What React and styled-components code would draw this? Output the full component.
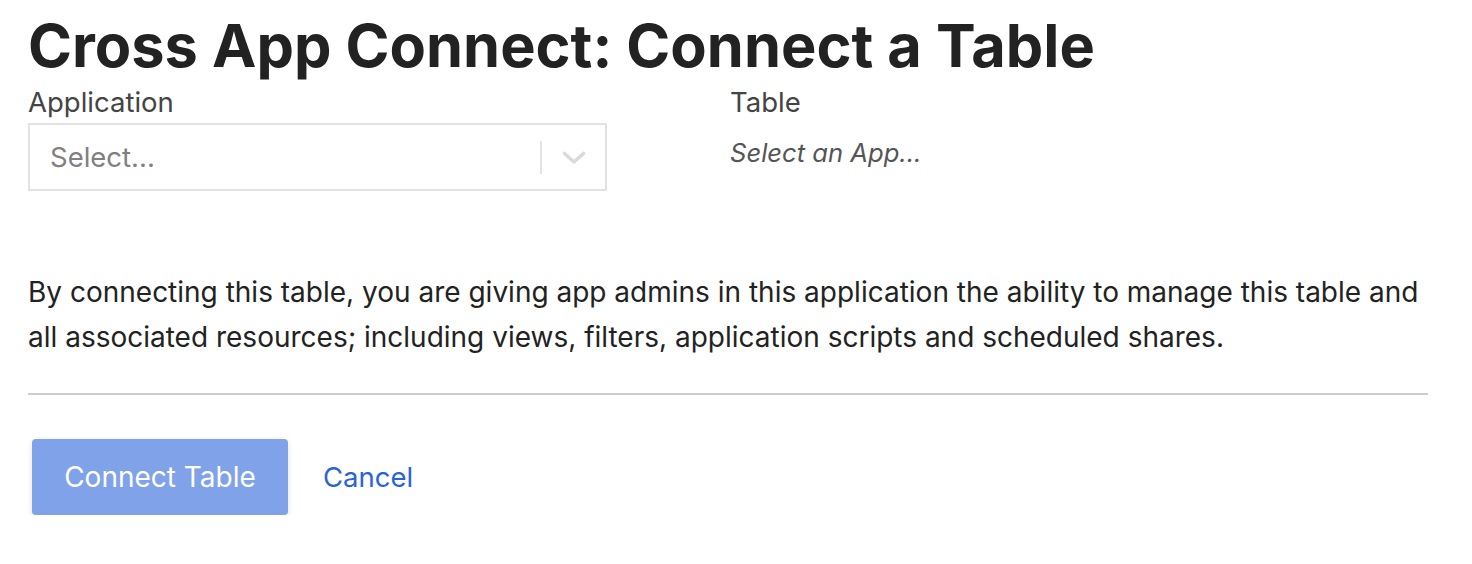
import React from "react";
import styled, { createGlobalStyle } from "styled-components";

const Global = createGlobalStyle`
  html, body { margin: 0; padding: 0; background: #fff; }
  body { font-family: Inter, "Noto Sans", sans-serif; color: #222; }
  * { box-sizing: border-box; }
`;

const Page = styled.div`
  padding: 9px 44px 0 28px;
  width: 1472px;
`;

const Title = styled.h1`
  margin: 0;
  font-size: 59.5px;
  line-height: 72px;
  font-weight: 700;
  color: #222;
`;

const Fields = styled.div`
  display: grid;
  grid-template-columns: 702px 1fr;
  margin-top: 4px;
`;

const Field = styled.div`
  display: flex;
  flex-direction: column;
`;

const Label = styled.label`
  font-size: 27.5px;
  line-height: 34px;
  color: #444;
`;

const SelectBox = styled.div`
  margin-top: 4px;
  width: 579px;
  height: 68px;
  border: 2px solid #e2e2e2;
  display: flex;
  align-items: center;
  padding: 0 19px 0 20px;
`;

const Placeholder = styled.span`
  flex: 1;
  font-size: 27.5px;
  color: #808080;
`;

const Separator = styled.span`
  width: 2px;
  height: 33px;
  background: #e3e3e3;
  margin-right: 20px;
`;

const Chevron = styled.svg`
  width: 24px;
  height: 14px;
  display: block;
  margin-top: 2px;
`;

const Muted = styled.div`
  margin-top: 18px;
  font-size: 25.6px;
  line-height: 32px;
  font-style: italic;
  color: #555;
`;

const Body = styled.p`
  margin: 77px 0 0;
  padding-top: 2px;
  font-size: 28px;
  line-height: 45px;
  color: #222;
`;

const Divider = styled.hr`
  margin: 33px 0 0;
  border: 0;
  height: 2px;
  background: #cccccc;
`;

const Actions = styled.div`
  display: flex;
  align-items: center;
  margin-top: 44px;
  padding-left: 4px;
  gap: 35px;
`;

const Button = styled.button`
  width: 256px;
  height: 76px;
  padding: 0;
  border: 0;
  border-radius: 4px;
  background: #80a2e8;
  color: #fff;
  font-family: inherit;
  font-size: 28px;
  box-shadow: 0 2px 6px rgba(0, 0, 0, 0.12);
  cursor: default;
`;

const LinkButton = styled.a`
  font-size: 27.5px;
  color: #2a63d9;
  text-decoration: none;
`;

export default function App() {
  return (
    <Page>
      <Global />
      <Title>Cross App Connect: Connect a Table</Title>
      <Fields>
        <Field>
          <Label>Application</Label>
          <SelectBox>
            <Placeholder>Select...</Placeholder>
            <Separator />
            <Chevron viewBox="0 0 24 14" fill="none" stroke="#dadada" strokeWidth="3.6" strokeLinecap="round" strokeLinejoin="round">
              <path d="M2.5 2.5L12 11L21.5 2.5" />
            </Chevron>
          </SelectBox>
        </Field>
        <Field>
          <Label>Table</Label>
          <Muted>Select an App...</Muted>
        </Field>
      </Fields>
      <Body>
        By connecting this table, you are giving app admins in this application the ability to manage this table and all associated resources; including views, filters, application scripts and scheduled shares.
      </Body>
      <Divider />
      <Actions>
        <Button>Connect Table</Button>
        <LinkButton href="#">Cancel</LinkButton>
      </Actions>
    </Page>
  );
}
